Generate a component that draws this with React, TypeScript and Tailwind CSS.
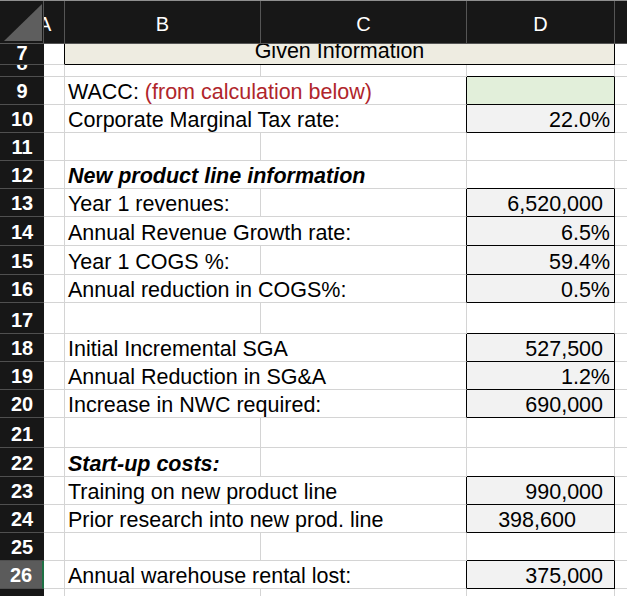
import React from "react";

type Row = {
  n: number;
  h: string;
  label?: string;
  red?: string;
  em?: boolean;
  wide?: boolean;
  val?: string;
  fmt?: "pct" | "num" | "mid";
  box?: "green" | "gray";
  sel?: boolean;
};

const rows: Row[] = [
  { n: 8, h: "h-[12px]" },
  { n: 9, h: "h-[28px]", label: "WACC: ", red: "(from calculation below)", wide: true, box: "green" },
  { n: 10, h: "h-[28px]", label: "Corporate Marginal Tax rate:", wide: true, val: "22.0%", fmt: "pct", box: "gray" },
  { n: 11, h: "h-[28px]" },
  { n: 12, h: "h-[28px]", label: "New product line information", em: true, wide: true },
  { n: 13, h: "h-[28px]", label: "Year 1 revenues:", val: "6,520,000", fmt: "num", box: "gray" },
  { n: 14, h: "h-[29px]", label: "Annual Revenue Growth rate:", wide: true, val: "6.5%", fmt: "pct", box: "gray" },
  { n: 15, h: "h-[29px]", label: "Year 1 COGS %:", val: "59.4%", fmt: "pct", box: "gray" },
  { n: 16, h: "h-[28px]", label: "Annual reduction in COGS%:", wide: true, val: "0.5%", fmt: "pct", box: "gray" },
  { n: 17, h: "h-[31px]" },
  { n: 18, h: "h-[28px]", label: "Initial Incremental SGA", wide: true, val: "527,500", fmt: "num", box: "gray" },
  { n: 19, h: "h-[28px]", label: "Annual Reduction in SG&A", wide: true, val: "1.2%", fmt: "pct", box: "gray" },
  { n: 20, h: "h-[28px]", label: "Increase in NWC required:", wide: true, val: "690,000", fmt: "num", box: "gray" },
  { n: 21, h: "h-[30px]" },
  { n: 22, h: "h-[29px]", label: "Start-up costs:", em: true },
  { n: 23, h: "h-[28px]", label: "Training on new product line", wide: true, val: "990,000", fmt: "num", box: "gray" },
  { n: 24, h: "h-[28px]", label: "Prior research into new prod. line", wide: true, val: "398,600", fmt: "mid", box: "gray" },
  { n: 25, h: "h-[28px]" },
  { n: 26, h: "h-[28px]", label: "Annual warehouse rental lost:", wide: true, val: "375,000", fmt: "num", box: "gray", sel: true },
  { n: 27, h: "h-[28px]" },
];

const cols = "grid grid-cols-[44px_21px_196px_206px_148px_1fr]";

function RowNum({ n, sel, tight }: { n: number; sel?: boolean; tight?: boolean }) {
  return (
    <div
      className={`flex items-end justify-center overflow-hidden border-b border-b-[#4f4f4f] text-[20px] font-bold leading-[22px] text-white ${
        tight ? "pb-0" : "pb-[2px]"
      } ${sel ? "bg-[#5b5b5b] border-r-2 border-r-[#1e7145]" : "bg-[#171717]"}`}
    >
      {n}
    </div>
  );
}

function SheetRow({ r, next }: { r: Row; next?: Row }) {
  const boxed = !!r.box;
  const edge = boxed ? "border-r-black" : "border-r-[#d4d4d4]";
  const dBottom = boxed || next?.box ? "border-b-black" : "border-b-[#d4d4d4]";
  const fill = r.box === "green" ? "bg-[#e2efda]" : r.box === "gray" ? "bg-[#f2f2f2]" : "";
  const align =
    r.fmt === "pct" ? "justify-end pr-[4px]" : r.fmt === "num" ? "justify-end pr-[11px]" : "justify-center pr-[7px]";

  return (
    <div className={`${cols} ${r.h}`}>
      <RowNum n={r.n} sel={r.sel} />
      <div className="border-b border-r border-[#d4d4d4]" />
      <div
        className={`flex items-end overflow-hidden border-b border-r border-b-[#d4d4d4] pl-[3px] ${
          r.wide ? `col-span-2 ${edge}` : "border-r-[#d4d4d4]"
        } ${r.em ? "font-bold italic" : ""}`}
      >
        <span className="whitespace-pre">
          {r.label}
          {r.red && <span className="text-[#b0252b]">{r.red}</span>}
        </span>
      </div>
      {!r.wide && <div className={`border-b border-r border-b-[#d4d4d4] ${edge}`} />}
      <div className={`flex items-end overflow-hidden whitespace-nowrap border-b border-r ${dBottom} ${edge} ${fill} ${align}`}>
        {r.val}
      </div>
      <div className="border-b border-[#d4d4d4]" />
    </div>
  );
}

export default function App() {
  return (
    <div className="h-[596px] w-[627px] overflow-hidden bg-white font-['Liberation_Sans',Arial,sans-serif] text-[21.5px] leading-[24px] text-black">
      {/* column headers */}
      <div className={`${cols} h-[44px] border-t border-t-[#8f8f8f] bg-[#171717] text-[20px] text-white`}>
        <div className="border-b border-r border-[#555555]">
          <svg width="43" height="42" viewBox="0 0 43 42" className="block">
            <polygon points="4,40 42,3 42,40" fill="#5e5e5e" />
          </svg>
        </div>
        <div className="flex items-center overflow-hidden border-b border-r border-[#555555] pt-[3px]">
          <span className="ml-[-6px]">A</span>
        </div>
        <div className="flex items-center justify-center border-b border-r border-[#555555] pt-[3px]">B</div>
        <div className="flex items-center justify-center border-b border-r border-[#555555] pt-[3px]">C</div>
        <div className="flex items-center justify-center border-b border-r border-[#555555] pt-[3px]">D</div>
        <div className="border-b border-[#555555]" />
      </div>

      {/* row 7: merged title */}
      <div className={`${cols} h-[21px]`}>
        <RowNum n={7} tight />
        <div className="border-b border-r border-b-[#d4d4d4] border-r-black" />
        <div className="col-span-3 flex items-end justify-center overflow-hidden whitespace-nowrap border-b border-r border-black bg-[#eeece1] pb-[1px]">
          Given Information
        </div>
        <div className="border-b border-[#d4d4d4]" />
      </div>

      {rows.map((r, i) => (
        <SheetRow key={r.n} r={r} next={rows[i + 1]} />
      ))}
    </div>
  );
}
